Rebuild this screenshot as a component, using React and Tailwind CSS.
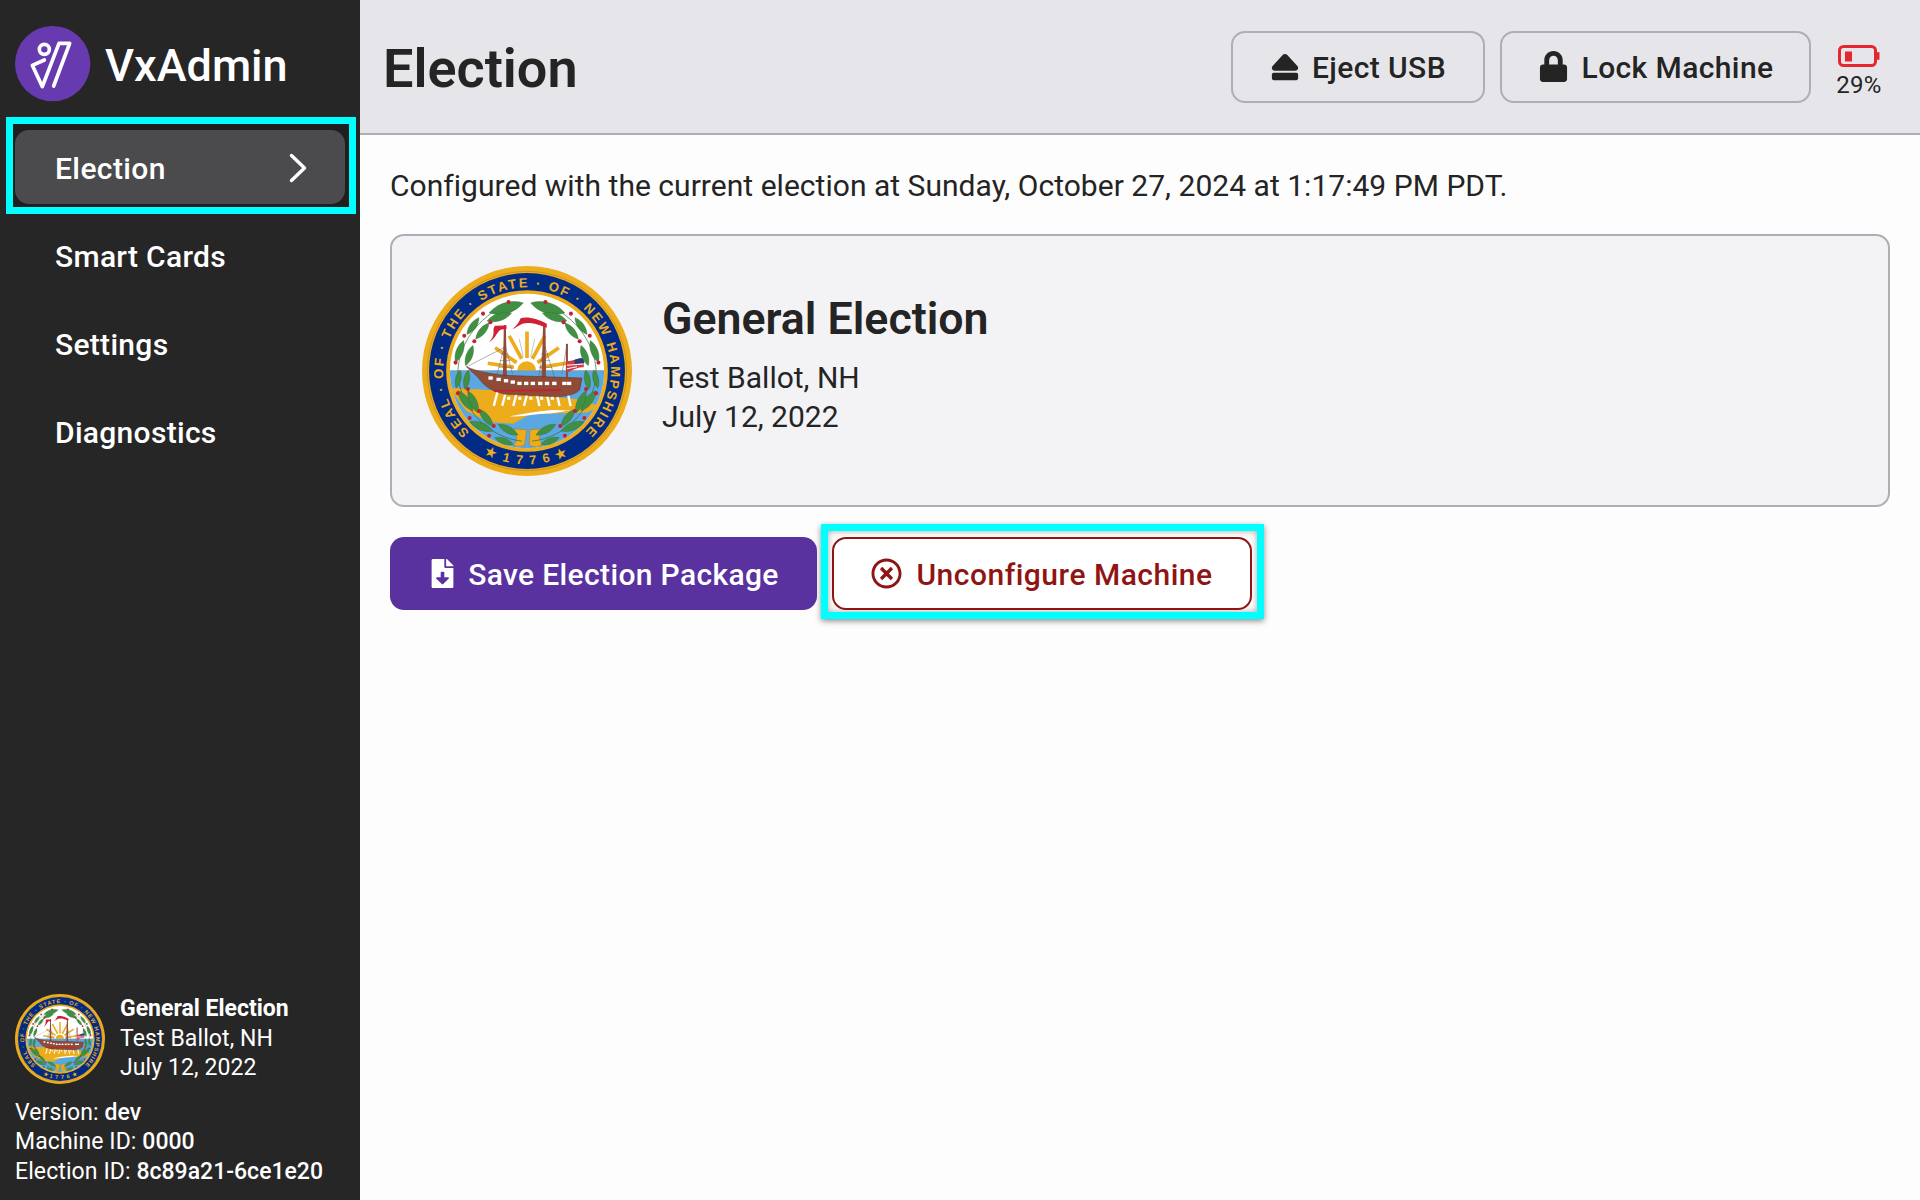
import React from "react";
import { FaEject, FaLock, FaFileDownload, FaRegTimesCircle } from "react-icons/fa";

// leaf base and tip, in the seal's own coordinates
const leaves = [
  [400, 218, 298, 248], [365, 248, 292, 272], [268, 262, 232, 312], [298, 278, 258, 326],
  [222, 330, 198, 395], [250, 345, 228, 405], [212, 418, 200, 472], [236, 418, 226, 476],
  [205, 480, 250, 540], [235, 480, 266, 546], [268, 535, 310, 586], [240, 572, 310, 600],
  [325, 580, 384, 612], [315, 620, 370, 640],
];

const berries = [
  [298, 614], [312, 585], [240, 561], [268, 540], [205, 487], [235, 475], [198, 396],
  [224, 316], [254, 332], [280, 250], [302, 276], [356, 215],
];

const oars = [320, 345, 378, 410, 442, 472, 502, 535];

const Seal = ({ id, className }) => {
  return (
    <svg viewBox="98 108 626 626" className={className}>
      <defs>
        <clipPath id={`${id}-inner`}>
          <circle cx="411" cy="421" r="230" />
        </clipPath>
        <path id={`${id}-top`} d="M 240 604 A 250 250 0 1 1 582 604" />
        <path id={`${id}-bottom`} d="M 250 648 A 278 278 0 0 0 572 648" />
      </defs>
      <circle cx="411" cy="421" r="313" fill="#edac1c" />
      <circle cx="411" cy="421" r="297" fill="none" stroke="#b98a20" strokeWidth="2" />
      <circle cx="411" cy="421" r="292" fill="#012b84" />
      <circle cx="411" cy="421" r="241" fill="#edac1c" />
      <circle cx="411" cy="421" r="230" fill="#ffffff" />
      <text fill="#edac1c" fontFamily="Liberation Sans, sans-serif" fontSize="39" fontWeight="700">
        <textPath href={`#${id}-top`} textLength="1190" lengthAdjust="spacing">
          SEAL · OF · THE · STATE · OF · NEW HAMPSHIRE
        </textPath>
      </text>
      <text fill="#edac1c" fontFamily="Liberation Sans, sans-serif" fontSize="38" fontWeight="700" textAnchor="middle">
        <textPath href={`#${id}-bottom`} startOffset="50%" letterSpacing="5">
          ★ 1 7 7 6 ★
        </textPath>
      </text>
      <g clipPath={`url(#${id}-inner)`}>
        <rect x="170" y="420" width="480" height="240" fill="#5aa7e2" />
        <path d="M 180 472 L 300 478 L 560 505 L 630 525 L 590 545 L 420 550 L 370 578 L 300 574 L 230 540 Z" fill="#edac1c" />
        <path d="M 360 556 C 400 550 440 540 480 538 C 500 536 530 542 560 536 L 480 548 C 440 546 400 560 360 556 Z" fill="#ffffff" />
        {/* sun */}
        <path d="M 382 420 A 28 28 0 0 1 438 420 Z" fill="#edac1c" />
        <g stroke="#edac1c" strokeWidth="11">
          <line x1="411" y1="382" x2="411" y2="303" />
          <line x1="395" y1="385" x2="358" y2="316" />
          <line x1="427" y1="385" x2="464" y2="316" />
          <line x1="380" y1="396" x2="316" y2="352" />
          <line x1="442" y1="396" x2="506" y2="352" />
          <line x1="372" y1="410" x2="294" y2="398" />
          <line x1="450" y1="410" x2="528" y2="398" />
        </g>
        <g stroke="#a9adb3" strokeWidth="2">
          <line x1="400" y1="380" x2="388" y2="325" />
          <line x1="422" y1="380" x2="434" y2="325" />
        </g>
        <line x1="170" y1="420" x2="650" y2="420" stroke="#7f8f99" strokeWidth="2" />
        {/* rigging */}
        <g stroke="#5f6670" strokeWidth="1.5" fill="none">
          <line x1="232" y1="408" x2="345" y2="350" />
          <path d="M 345 340 L 322 430 M 345 340 L 368 430 M 462 340 L 445 445 M 462 340 L 495 445" />
          <path d="M 335 370 L 355 370 M 330 390 L 360 390 M 326 410 L 364 410 M 452 370 L 474 370 M 449 390 L 480 390 M 446 410 L 486 410" />
          <path d="M 530 345 L 515 430" />
        </g>
        {/* masts */}
        <path d="M 342 284 L 348 284 L 351 440 L 339 440 Z" fill="#8f4a38" />
        <path d="M 459 280 L 466 280 L 468 456 L 454 456 Z" fill="#8f4a38" />
        <rect x="527" y="340" width="6" height="100" fill="#8f4a38" />
        {/* flags */}
        <path d="M 350 285 L 316 286 C 304 300 322 308 298 335 C 322 320 320 302 335 297 L 350 296 Z" fill="#d11f35" />
        <path d="M 470 280 C 440 264 410 258 392 264 C 386 278 382 284 368 296 C 388 288 392 276 420 278 C 440 280 456 288 470 292 Z" fill="#d11f35" />
        <path d="M 528 392 C 545 394 565 380 582 384 L 580 410 C 562 408 545 420 530 426 Z" fill="#d33a47" />
        <path d="M 552 388 C 562 384 572 382 582 384 L 581 398 C 572 396 562 398 554 402 Z" fill="#22407f" />
        <path d="M 530 404 L 580 400 M 530 414 L 560 408" stroke="#ffffff" strokeWidth="3" />
        {/* oars */}
        {oars.map((x, i) => (
          <line key={x} x1={x + (i < 4 ? 4 : -4)} y1="480" x2={x - (i < 4 ? 8 : -6)} y2="525" stroke="#ffffff" strokeWidth="7" />
        ))}
        {/* hull */}
        <path d="M 230 408 C 270 425 300 428 345 434 L 575 442 L 568 478 C 552 492 530 496 500 498 L 345 490 C 310 482 285 470 265 440 Z" fill="#8f4a38" stroke="#5b2d25" strokeWidth="1.5" />
        <path d="M 312 480 L 512 478" stroke="#c4202f" strokeWidth="5" />
        <g fill="#ffffff">
          {[296, 320, 342, 362, 382, 402, 422, 444, 464, 486, 516, 530].map((x, i) => (
            <rect key={x} x={x} y={434 + Math.min(i, 4) * 4 + 3} width="13" height="10" />
          ))}
          {[352, 385, 418, 450, 482].map((x) => (
            <rect key={x} x={x} y="498" width="9" height="9" />
          ))}
        </g>
        {/* cuffs at the foot of the wreath */}
        <path d="M 372 594 L 410 596 L 404 640 C 392 650 376 646 372 640 C 386 630 378 610 372 594 Z" fill="#edac1c" stroke="#a87a14" strokeWidth="1.5" />
        <path d="M 420 596 L 456 594 C 446 612 444 630 460 640 C 445 650 426 648 418 640 Z" fill="#edac1c" stroke="#a87a14" strokeWidth="1.5" />
      </g>
      {[0, 1].map((side) => (
        <g key={side} transform={side ? "translate(822 0) scale(-1 1)" : undefined}>
          <path d="M 396 630 C 300 620 220 540 205 440 C 200 350 260 260 360 218" fill="none" stroke="#2e6b33" strokeWidth="2" />
          {leaves.map(([x1, y1, x2, y2]) => {
            const len = Math.hypot(x2 - x1, y2 - y1);
            const rot = (Math.atan2(y2 - y1, x2 - x1) * 180) / Math.PI;
            return (
              <path
                key={`${x1}-${y1}`}
                transform={`translate(${x1} ${y1}) rotate(${rot})`}
                d={`M 0 0 C ${len * 0.3} ${-len * 0.2} ${len * 0.7} ${-len * 0.2} ${len} 0 C ${len * 0.7} ${len * 0.2} ${len * 0.3} ${len * 0.2} 0 0 Z`}
                fill="#418f43"
                stroke="#2c6a30"
                strokeWidth="1"
              />
            );
          })}
          {berries.map(([x, y]) => (
            <circle key={`${x}-${y}`} cx={x} cy={y} r="6" fill="#c51f35" />
          ))}
        </g>
      ))}
    </svg>
  );
};

const Logo = () => {
  return (
    <svg viewBox="0 0 228 228" className="w-[76px] h-[76px] shrink-0">
      <circle cx="113" cy="113" r="113" fill="#673ab0" />
      <g fill="none" stroke="#ffffff" strokeWidth="11" strokeLinecap="round" strokeLinejoin="round">
        <circle cx="88" cy="70" r="15" />
        <path d="M 52 118 L 88 102 M 52 118 L 82 182 L 132 52 L 164 52 L 116 180" />
      </g>
    </svg>
  );
};

const Battery = () => {
  return (
    <svg viewBox="0 0 42 24" className="w-[42px] h-6">
      <rect x="1.5" y="1.5" width="36" height="19" rx="4" fill="none" stroke="#e5282e" strokeWidth="3" />
      <rect x="7" y="6.5" width="7" height="10" fill="#e5282e" />
      <rect x="39" y="7" width="2.5" height="8" rx="1" fill="#e5282e" />
    </svg>
  );
};

const NavItem = ({ label }) => {
  return (
    <div className="h-[74px] mb-[14px] pl-[40px] flex items-center text-[30px] tracking-[0.3px] font-medium text-white">
      <span className="pt-[2px]">{label}</span>
    </div>
  );
};

const HeaderButton = ({ icon, label, width, gap }) => {
  return (
    <button className={`${width} ${gap} h-[72px] flex items-center justify-center rounded-[14px] border-2 border-[#aeaeb4] text-[30px] tracking-[0.4px] font-medium text-[#242424]`}>
      {icon}
      <span className="pt-[2px]">{label}</span>
    </button>
  );
};

const App = () => {
  return (
    <div className="flex w-[1920px] h-[1200px] overflow-hidden bg-[#fdfdfd] text-[#242424] font-['Roboto',sans-serif]">
      <aside className="w-[360px] shrink-0 bg-[#262626] flex flex-col text-white">
        <div className="h-[124px] pl-[15px] pt-[26px] flex items-start gap-[14px]">
          <Logo />
          <span className="text-[45px] leading-[76px] pt-[2px] font-medium">VxAdmin</span>
        </div>
        <div className="ml-[13px] w-[336px] h-[83px] pl-[2px] pt-[6px] bg-[#1f1f1f] outline-[7px] outline-[#00ffff]">
          <div className="w-[330px] h-[74px] pl-[40px] pr-[38px] rounded-[14px] bg-[#4b4b4d] flex items-center justify-between text-[30px] tracking-[0.4px] font-medium">
            <span className="pt-[3px]">Election</span>
            <svg viewBox="0 0 18 30" className="w-[18px] h-[30px] mt-[2px]" fill="none" stroke="#ffffff" strokeWidth="3.4" strokeLinecap="round" strokeLinejoin="round">
              <path d="M 2.5 2.5 L 15.5 15 L 2.5 27.5" />
            </svg>
          </div>
        </div>
        <nav className="pl-[15px] pt-[11px]">
          <NavItem label="Smart Cards" />
          <NavItem label="Settings" />
          <NavItem label="Diagnostics" />
        </nav>
        <div className="mt-auto pl-[15px] pb-[14px] text-[23px] tracking-[0.1px] leading-[29.5px]">
          <div className="flex items-center gap-[15px] mb-[14px]">
            <Seal id="small-seal" className="w-[90px] h-[90px] shrink-0" />
            <div>
              <div className="font-bold tracking-normal">General Election</div>
              <div>Test Ballot, NH</div>
              <div>July 12, 2022</div>
            </div>
          </div>
          <div>Version: <span className="font-medium tracking-normal">dev</span></div>
          <div>Machine ID: <span className="font-medium tracking-normal">0000</span></div>
          <div>Election ID: <span className="font-medium tracking-normal">8c89a21-6ce1e20</span></div>
        </div>
      </aside>
      <main className="flex-1 flex flex-col">
        <header className="h-[135px] bg-[#e6e6ea] border-b-2 border-[#aeaeb4] pl-[23px] pr-[36px] flex items-center">
          <h1 className="text-[54px] pt-[3px] font-semibold">Election</h1>
          <div className="ml-auto flex items-center">
            <HeaderButton icon={<FaEject size={30} />} label="Eject USB" width="w-[254px]" gap="gap-[12px]" />
            <div className="w-[15px]" />
            <HeaderButton icon={<FaLock size={31} />} label="Lock Machine" width="w-[311px]" gap="gap-[13px]" />
            <div className="ml-[23px] w-[50px] pt-[11px] flex flex-col items-center">
              <Battery />
              <span className="mt-[1px] text-[24px] tracking-[0.3px] leading-[30px]">29%</span>
            </div>
          </div>
        </header>
        <div className="px-[30px] pt-[31px]">
          <p className="text-[30px] tracking-[0.03px] leading-[40px]">
            Configured with the current election at Sunday, October 27, 2024 at 1:17:49 PM PDT.
          </p>
          <div className="mt-[28px] h-[273px] rounded-[14px] border-2 border-[#aeaeb4] bg-[#f3f3f6] pl-[30px] flex items-center gap-[30px]">
            <Seal id="large-seal" className="w-[210px] h-[210px] shrink-0" />
            <div className="-mt-[15px]">
              <h2 className="text-[44.7px] leading-[56px] font-semibold">General Election</h2>
              <div className="mt-[11px] text-[30px] leading-[39px]">
                <div>Test Ballot, NH</div>
                <div>July 12, 2022</div>
              </div>
            </div>
          </div>
          <div className="mt-[17px] flex items-start">
            <button className="mt-[13px] w-[427px] h-[73px] rounded-[14px] bg-[#5a32a0] text-white flex items-center justify-center gap-[11px] text-[30px] tracking-[0.35px] font-medium">
              <FaFileDownload size={29} />
              <span className="pt-[2px]">Save Election Package</span>
            </button>
            <div className="ml-[4px] w-[443px] h-[95px] pl-[4px] pt-[6px] border-[7px] border-[#00ffff] shadow-[0_2px_6px_rgba(0,0,0,0.45),inset_0_0_6px_rgba(0,0,0,0.35)]">
              <button className="w-[420px] h-[73px] rounded-[14px] border-2 border-[#8f1414] bg-white text-[#8f1414] flex items-center justify-center gap-[14px] text-[30px] tracking-[0.5px] font-medium">
                <FaRegTimesCircle size={31} />
                <span className="pt-[2px]">Unconfigure Machine</span>
              </button>
            </div>
          </div>
        </div>
      </main>
    </div>
  );
};

export default App;
